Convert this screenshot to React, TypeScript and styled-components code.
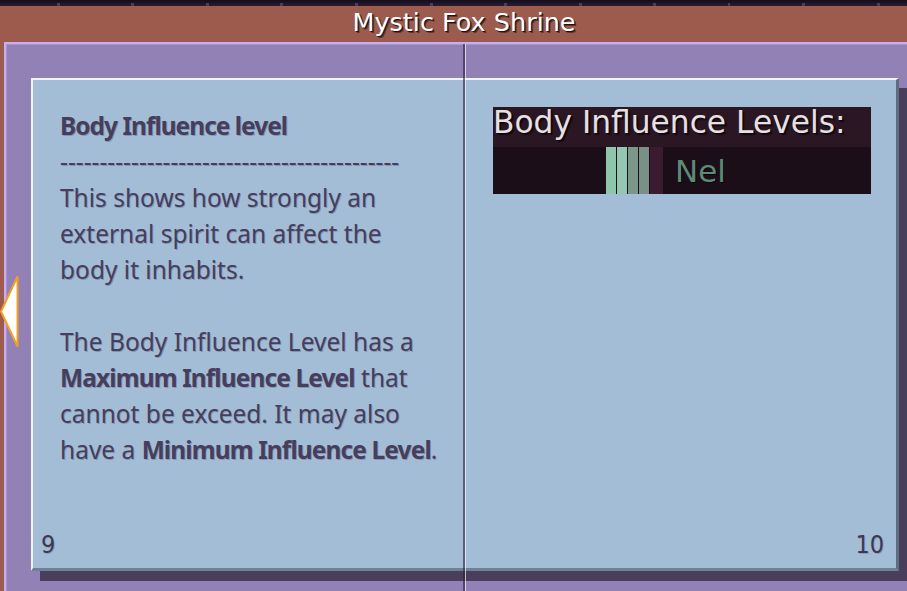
import React from "react";
import styled, { createGlobalStyle } from "styled-components";

const GlobalStyle = createGlobalStyle`
  html, body { margin: 0; padding: 0; background: #9c5b4c; overflow: hidden; }
  #root { width: 907px; height: 591px; }
`;

const Screen = styled.div`
  position: relative;
  width: 907px;
  height: 591px;
  display: flex;
  flex-direction: column;
  background: #9c5b4c;
  overflow: hidden;
`;

const TopStrip = styled.div`
  height: 6px;
  flex: none;
  background:
    repeating-linear-gradient(
      to right,
      transparent 0 57px,
      #4a3a5e 57px 60px,
      transparent 60px 74.5px
    ) bottom / 100% 3px no-repeat,
    linear-gradient(#150c1a, #2a1c33);
`;

const Header = styled.header`
  height: 36px;
  flex: none;
  display: flex;
  align-items: center;
  justify-content: center;
  padding-left: 21px;
`;

const Title = styled.h1`
  margin: 0 0 4px;
  font-family: "DejaVu Sans", sans-serif;
  font-weight: normal;
  font-size: 25.5px;
  line-height: 28px;
  color: #ffffff;
  text-shadow: 1px 1px 0 #1e1014, 2px 2px 0 rgba(30, 16, 20, 0.5);
`;

const Body = styled.div`
  flex: 1;
  display: flex;
  padding-left: 4px;
  min-height: 0;
`;

const Panel = styled.section`
  position: relative;
  flex: 1;
  background: #9281b5;
  border-top: 2px solid #c8aef0;
  border-left: 2px solid #c8aef0;
  box-shadow: inset 1px 1px 0 #a893d0;
  padding: 34px 0 0 25px;
`;

const Divider = styled.div`
  position: absolute;
  left: 457px;
  top: 0;
  bottom: 0;
  width: 3px;
  background: linear-gradient(
    to right,
    rgba(40, 30, 62, 0.6) 0 2px,
    rgba(255, 255, 255, 0.65) 2px 3px
  );
  z-index: 2;
`;

const Page = styled.div`
  width: 863px;
  height: 488px;
  display: grid;
  grid-template-columns: 430px 430px;
  column-gap: 3px;
  background: #a3bdd7;
  border-top: 2px solid #eef4fa;
  border-left: 2px solid #eef4fa;
  border-right: 3px solid #5e6e80;
  border-bottom: 3px solid #6c8096;
  box-shadow: 9px 10px 0 #493f5d;
`;

const Half = styled.div<{ $side: "left" | "right" }>`
  display: flex;
  flex-direction: column;
  padding: ${(p) => (p.$side === "left" ? "28px 0 9px 27px" : "27px 0 9px 27px")};
`;

const Text = styled.div`
  font-family: "Noto Sans", "Open Sans", sans-serif;
  font-size: 24.5px;
  line-height: 36px;
  color: #463e5c;
  text-shadow: 1px 1px 0 rgba(40, 30, 60, 0.25);
  white-space: nowrap;
`;

const Heading = styled.span`
  font-weight: 700;
  letter-spacing: -1px;
`;

const Strong = styled.b`
  font-weight: 700;
  letter-spacing: -0.9px;
`;

const PageNumber = styled.div<{ $side: "left" | "right" }>`
  margin-top: auto;
  font-family: "DejaVu Sans Condensed", "DejaVu Sans", sans-serif;
  font-stretch: condensed;
  font-size: 25px;
  line-height: 29px;
  color: #3d3853;
  text-shadow: 1px 1px 0 rgba(30, 20, 50, 0.2);
  align-self: ${(p) => (p.$side === "left" ? "flex-start" : "flex-end")};
  margin-left: ${(p) => (p.$side === "left" ? "-19px" : "0")};
  margin-right: ${(p) => (p.$side === "right" ? "12px" : "0")};
`;

const LevelsCard = styled.div`
  width: 378px;
  display: flex;
  flex-direction: column;
`;

const LevelsTitle = styled.div`
  height: 40px;
  background: #2b1624;
  font-family: "DejaVu Sans", sans-serif;
  font-size: 31.3px;
  line-height: 31px;
  color: #e6e0e2;
  text-shadow: 1px 1px 0 #0e060b, 2px 2px 1px rgba(0, 0, 0, 0.6);
  white-space: nowrap;
`;

const LevelsRow = styled.div`
  height: 47px;
  background: #1c0e18;
  display: flex;
  align-items: stretch;
  padding-left: 113px;
`;

const Bar = styled.div<{ $color: string; $w: number }>`
  width: ${(p) => p.$w}px;
  margin-right: 1px;
  background: ${(p) => p.$color};
`;

const LevelName = styled.div`
  align-self: center;
  margin-left: 11px;
  font-family: "DejaVu Sans", sans-serif;
  font-size: 31px;
  line-height: 36px;
  color: #5e8a77;
  text-shadow: 1px 1px 0 #0a0508;
`;

const ArrowButton = styled.button`
  position: absolute;
  left: 0;
  top: 275px;
  width: 19px;
  height: 73px;
  padding: 0;
  border: 0;
  background: transparent;
  display: block;
  z-index: 3;
`;

const bars = [
  { color: "#8fc4ad", w: 10 },
  { color: "#93c7b1", w: 10 },
  { color: "#7c968a", w: 10 },
  { color: "#7a9086", w: 10 },
  { color: "#3a1b2f", w: 13 },
];

export default function App() {
  return (
    <Screen>
      <GlobalStyle />
      <TopStrip />
      <Header>
        <Title>Mystic Fox Shrine</Title>
      </Header>
      <Body>
        <Panel>
          <Divider />
          <Page>
            <Half $side="left">
              <Text>
                <Heading>Body Influence level</Heading>
                <br />
                {"-".repeat(43)}
                <br />
                This shows how strongly an
                <br />
                external spirit can affect the
                <br />
                body it inhabits.
                <br />
                <br />
                The Body Influence Level has a
                <br />
                <Strong>Maximum Influence Level</Strong> that
                <br />
                cannot be exceed. It may also
                <br />
                have a <Strong>Minimum Influence Level</Strong>.
              </Text>
              <PageNumber $side="left">9</PageNumber>
            </Half>
            <Half $side="right">
              <LevelsCard>
                <LevelsTitle>Body Influence Levels:</LevelsTitle>
                <LevelsRow>
                  {bars.map((b, i) => (
                    <Bar key={i} $color={b.color} $w={b.w} />
                  ))}
                  <LevelName>Nel</LevelName>
                </LevelsRow>
              </LevelsCard>
              <PageNumber $side="right">10</PageNumber>
            </Half>
          </Page>
        </Panel>
      </Body>
      <ArrowButton aria-label="Previous page">
        <svg width="19" height="73" viewBox="0 0 19 73">
          <polygon
            points="1,36.5 17.5,1.5 17.5,71.5"
            fill="#ffffff"
            stroke="#f2a024"
            strokeWidth="2"
            strokeLinejoin="miter"
          />
        </svg>
      </ArrowButton>
    </Screen>
  );
}
